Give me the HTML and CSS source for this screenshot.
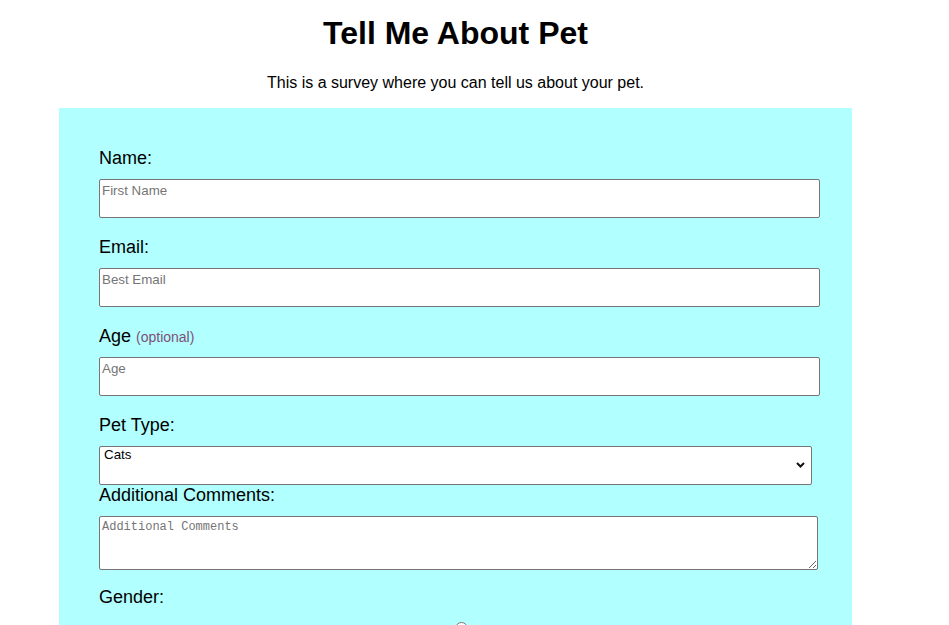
FILE: index.html
```html
<!DOCTYPE html>
<html lang="en">
<head>
<meta charset="utf-8">
<title>Tell Me About Pet</title>
<link rel="stylesheet" href="styles.css">
</head>
<body>
<main class="page">
  <h1 class="title">Tell Me About Pet</h1>
  <p class="intro">This is a survey where you can tell us about your pet.</p>
  <form class="survey">
    <label class="field-label" for="name">Name:</label>
    <input class="text-input" id="name" type="text" placeholder="First Name">

    <label class="field-label" for="email">Email:</label>
    <input class="text-input" id="email" type="email" placeholder="Best Email">

    <label class="field-label" for="age">Age <span class="optional">(optional)</span></label>
    <input class="text-input" id="age" type="text" inputmode="numeric" placeholder="Age">

    <label class="field-label" for="pet">Pet Type:</label>
    <div class="select-wrap">
      <select class="select" id="pet">
        <option>Cats</option>
        <option>Dogs</option>
        <option>Birds</option>
        <option>Other</option>
      </select>
      <svg class="chevron" width="9" height="6" viewBox="0 0 9 6" aria-hidden="true">
        <path d="M1 1 L4.5 4.5 L8 1" fill="none" stroke="#111" stroke-width="2"/>
      </svg>
    </div>

    <label class="field-label" for="comments">Additional Comments:</label>
    <textarea class="comments" id="comments" placeholder="Additional Comments"></textarea>

    <div class="field-label">Gender:</div>
    <div class="radio-row">
      <input class="radio" type="radio" name="gender" id="male" value="male" aria-label="Male">
    </div>
  </form>
</main>
</body>
</html>
```

FILE: styles.css
```css
html, body {
  margin: 0;
  padding: 0;
  background: #ffffff;
}

body {
  font-family: "Liberation Sans", Arial, sans-serif;
  color: #000000;
}

.page {
  width: 911px;
  padding-top: 15px;
}

.title {
  margin: 0 0 22px;
  font-size: 32px;
  font-weight: 700;
  line-height: normal;
  text-align: center;
}

.intro {
  margin: 0 0 16px;
  font-size: 16px;
  line-height: normal;
  text-align: center;
}

.survey {
  box-sizing: border-box;
  width: 793px;
  margin: 0 auto;
  padding: 40px 40px 60px;
  background: #b1ffff;
}

.field-label {
  display: block;
  font-size: 18px;
  line-height: 21px;
}

.optional {
  font-size: 14px;
  line-height: 1;
  color: #804f78;
}

.text-input {
  display: block;
  box-sizing: border-box;
  width: 721px;
  height: 39px;
  margin: 10px 0 19px;
  padding: 2px 2px 19px;
  border: 1px solid #767676;
  border-radius: 2px;
  background: #ffffff;
  font-family: "Liberation Sans", Arial, sans-serif;
  font-size: 13.33px;
  color: #000000;
}

.text-input::placeholder,
.comments::placeholder {
  color: #757575;
}

.select-wrap {
  position: relative;
  width: 713px;
  margin-top: 10px;
}

.select {
  display: block;
  box-sizing: border-box;
  width: 713px;
  height: 39px;
  margin: 0;
  padding: 0 4px 22px;
  border: 1px solid #767676;
  border-radius: 2px;
  background: #ffffff;
  font-family: "Liberation Sans", Arial, sans-serif;
  font-size: 13.33px;
  color: #000000;
  -webkit-appearance: none;
  appearance: none;
}

.chevron {
  position: absolute;
  right: 7px;
  top: 16px;
  pointer-events: none;
}

.comments {
  display: block;
  box-sizing: border-box;
  width: 719px;
  height: 54px;
  margin: 10px 0 17px;
  padding: 3px 2px 2px;
  border: 1px solid #767676;
  border-radius: 2px;
  background: #ffffff;
  font-family: "Liberation Mono", "Courier New", monospace;
  font-size: 12px;
}

.radio-row {
  display: flex;
  justify-content: center;
  padding: 14px 0 0 11px;
}

.radio {
  width: 13px;
  height: 13px;
  margin: 0;
}
```
